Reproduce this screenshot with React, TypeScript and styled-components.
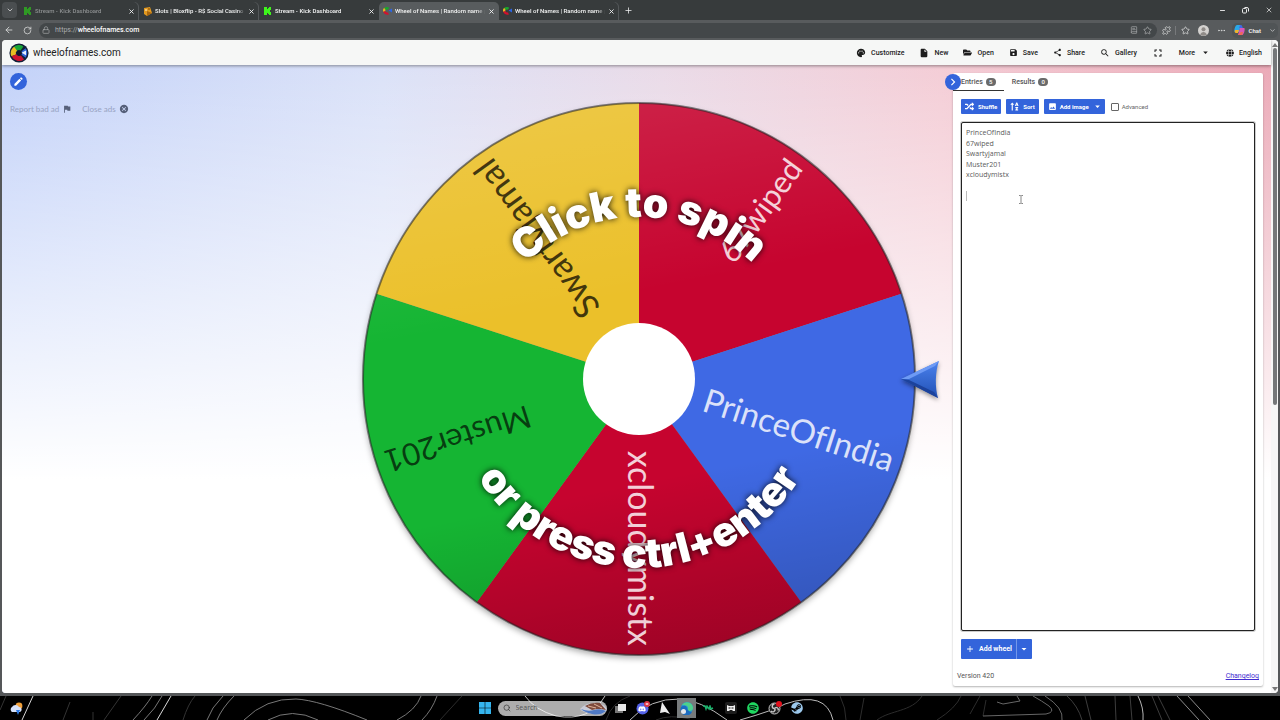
import React from "react";
import styled, { createGlobalStyle, css } from "styled-components";
import {
  MdPalette, MdInsertDriveFile, MdSave, MdShare, MdSearch, MdFullscreen,
  MdArrowDropDown, MdImage, MdFlag, MdCancel, MdEdit, MdAdd, MdChevronRight,
} from "react-icons/md";
import { FaFolderOpen, FaGlobe, FaRandom, FaSortAlphaUp, FaSpotify, FaSteam, FaDiscord } from "react-icons/fa";
import {
  ArrowLeft, RotateCw, Lock, X, Plus, Minus, ChevronDown, Star,
  BookText, Puzzle, Ellipsis, Search,
} from "lucide-react";

const GlobalStyle = createGlobalStyle`
  *, *::before, *::after { box-sizing: border-box; }
  html, body, #root { height: 100%; }
  body { margin: 0; background: #000; font-family: Roboto, "Liberation Sans", sans-serif; }
  button { font: inherit; border: 0; padding: 0; background: none; color: inherit; cursor: pointer; }
  svg { display: block; flex: none; }
`;

const BLUE = "#3364db";
const uiFont = css`font-family: "Open Sans", "Noto Sans", sans-serif;`;

const Screen = styled.div`
  display: flex; flex-direction: column; height: 100vh; overflow: hidden;
`;

/* Browser chrome */
const TabStrip = styled.div`
  display: flex; align-items: stretch; height: 20px; background: #373b3c; color: #f4f5f5;
  font-size: 6px; font-weight: 500;
`;
const TabMenu = styled.button`
  width: 15px; height: 16px; margin: 2px; border-radius: 4px; background: #4a4e50;
  display: grid; place-items: center;
`;
const Tab = styled.div<{ $active?: boolean; $divided?: boolean }>`
  display: flex; align-items: center; gap: 3px; flex: 0 1 120px; min-width: 0;
  margin-top: 2px; padding: 0 4px; border-radius: 5px 5px 0 0;
  background: ${(p) => (p.$active ? "#585c5e" : "transparent")};
  box-shadow: ${(p) => (p.$divided ? "inset -1px 0 #54585a" : "none")};
`;
const TabTitle = styled.span<{ $muted?: boolean }>`
  flex: 1; min-width: 0; overflow: hidden; white-space: nowrap; line-height: 10px;
  color: ${(p) => (p.$muted ? "#8d9091" : "inherit")};
  mask-image: linear-gradient(to right, #000 calc(100% - 8px), transparent);
`;
const NewTab = styled.button`width: 18px; display: grid; place-items: center;`;
const WindowControls = styled.div`display: flex; margin-left: auto;`;
const WindowButton = styled.button`width: 23px; display: grid; place-items: center;`;

const AddressBar = styled.div`
  display: flex; align-items: center; height: 20px; padding: 0 2px 0 0; background: #585b5d; color: #dcdddd;
  font-size: 7px;
`;
const NavButton = styled.button`width: 18px; display: grid; place-items: center;`;
const UrlField = styled.div`
  flex: 1; display: flex; align-items: center; gap: 5px; height: 15px; margin-left: 3px; padding: 0 5px 0 3px;
  border-radius: 8px; background: #434749; color: #a9abac;
`;
const UrlText = styled.span`flex: 1; line-height: 10px; b { color: #fff; font-weight: 500; }`;
const BarButton = styled.button`width: 18px; display: grid; place-items: center;`;
const BarDivider = styled.span`width: 1px; height: 9px; background: #77797b;`;
const ChatButton = styled.button`
  display: flex; align-items: center; gap: 3px; height: 15px; margin-left: 2px; padding: 0 2px; border-radius: 5px;
  background: #505456; font-size: 6px; font-weight: 600; color: #f2f2f2;
  svg:last-child { margin-left: 5px; }
`;

/* Page */
const Frame = styled.div`
  flex: 1; min-height: 0; display: flex; padding: 0 2px 3px; background: #555759;
`;
const Viewport = styled.div`
  flex: 1; min-width: 0; display: flex; border-radius: 4px; overflow: hidden; background: #fff;
`;
const Page = styled.div`flex: 1; min-width: 0; display: flex; flex-direction: column;`;
const Header = styled.header`
  display: flex; align-items: center; justify-content: space-between; height: 25px; padding: 0 9px 0 7px;
  background: #f6f7f6; box-shadow: 0 1px 3px rgba(0, 0, 0, 0.4); z-index: 1; color: #1d1d1d;
`;
const Brand = styled.a`
  display: flex; align-items: center; gap: 4px; font-size: 10px; line-height: 14px; color: #222; text-decoration: none;
`;
const Nav = styled.nav`display: flex; align-items: center; gap: 15px;`;
const NavItem = styled.button`
  display: flex; align-items: center; gap: 5px; font-size: 7px; font-weight: 500; line-height: 10px;
`;
const Stage = styled.main`
  flex: 1; min-height: 0; display: grid; grid-template-columns: minmax(0, 1fr) minmax(0, 600px) 310px;
  column-gap: 8px; padding: 8px 8px 7px;
  background:
    linear-gradient(to bottom, rgba(255, 255, 255, 0) 0%, rgba(255, 255, 255, 0.55) 36%, #fff 66%),
    linear-gradient(to right, #c3d2f9 0%, #dbe2f8 30%, #eadbe8 52%, #f4cdd6 74%, #eba9b7 100%);
`;
const Side = styled.aside`display: flex; flex-direction: column; align-items: flex-start; gap: 14px;`;
const EditButton = styled.button`
  width: 17px; height: 17px; border-radius: 50%; background: ${BLUE}; color: #fff; display: grid; place-items: center;
`;
const AdLinks = styled.div`
  display: flex; gap: 10px; font-family: Lato, sans-serif; font-size: 8px; line-height: 10px; color: #98a3c2;
`;
const AdLink = styled.button`display: flex; align-items: center; gap: 3px; svg { color: #56607a; }`;
const WheelArea = styled.div`display: flex; align-items: center; padding-bottom: 2px;`;
const WheelSvg = styled.svg`width: 100%; height: auto; overflow: visible;`;
const SliceLabel = styled.text`
  font-family: Lato, "Open Sans", sans-serif; font-weight: 400; text-anchor: end; dominant-baseline: central;
`;
const Hint = styled.text`
  font-family: Inter, Roboto, sans-serif; font-size: 41px; font-weight: 900; text-anchor: middle; fill: #fff;
  filter: drop-shadow(0 0 3px rgba(0, 0, 0, 0.9));
`;
const WheelArrow = styled.g`filter: drop-shadow(0 2px 2px rgba(0, 0, 0, 0.4));`;

/* Entries panel */
const Panel = styled.section`
  position: relative; display: flex; flex-direction: column; min-height: 0; background: #fff;
  border-radius: 2px; box-shadow: 0 1px 2px rgba(0, 0, 0, 0.3);
`;
const CollapseButton = styled.button`
  position: absolute; left: -8px; top: 1px; width: 16px; height: 16px; border-radius: 50%;
  background: ${BLUE}; color: #fff; display: grid; place-items: center;
`;
const PanelTabs = styled.div`display: flex; height: 18px;`;
const PanelTab = styled.button<{ $active?: boolean }>`
  display: flex; align-items: center; gap: 3px; padding: 0 8px; font-size: 7px; font-weight: 500; line-height: 10px;
  color: #555; border-bottom: 1px solid ${(p) => (p.$active ? "#333" : "transparent")};
`;
const Badge = styled.span`
  min-width: 10px; height: 8px; padding: 0 3px; border-radius: 4px; background: #6a6a6a; color: #fff;
  font-size: 6px; line-height: 8px; text-align: center;
`;
const PanelBody = styled.div`
  flex: 1; min-height: 0; display: flex; flex-direction: column; padding: 8px 8px 0; gap: 8px;
`;
const Tools = styled.div`display: flex; align-items: center; gap: 5px;`;
const ToolButton = styled.button`
  display: flex; align-items: center; gap: 4px; height: 15px; padding: 0 4px; border-radius: 1px;
  background: ${BLUE}; color: #fff; font-size: 6px; font-weight: 700; line-height: 8px; white-space: nowrap;
`;
const MenuToolButton = styled(ToolButton)`gap: 3px; padding-right: 2px;`;
const CheckLabel = styled.label`
  display: flex; align-items: center; gap: 3px; margin-left: 1px; font-size: 6px; line-height: 8px; color: #666;
`;
const CheckBox = styled.input`
  appearance: none; width: 8px; height: 8px; margin: 0; border: 1px solid #666; border-radius: 1px; background: #fff;
`;
const EntryBox = styled.div`position: relative; flex: 1; min-height: 0; display: flex;`;
const Entries = styled.textarea`
  ${uiFont}
  flex: 1; min-width: 0; resize: none; outline: none; padding: 5px 4px; border: 1px solid #222; border-radius: 2px;
  font-size: 7px; line-height: 1.5; color: #5a5a5a; background: #fff;
  box-shadow: 0 0 0 1px rgba(0, 0, 0, 0.2);
`;
const Caret = styled.span`position: absolute; left: 5px; top: 69px; width: 1px; height: 10px; background: #bbb;`;
const Pointer = styled.svg`position: absolute; left: 57px; top: 73px;`;
const SplitButton = styled.div`
  display: flex; align-self: flex-start; border-radius: 1px; background: ${BLUE}; color: #fff;
`;
const AddWheel = styled.button`
  display: flex; align-items: center; gap: 4px; height: 20px; padding: 0 4px; font-size: 7px; font-weight: 700;
  border-right: 1px solid #7397ea;
`;
const AddMore = styled.button`width: 15px; height: 20px; display: grid; place-items: center;`;
const PanelFooter = styled.footer`
  display: flex; justify-content: space-between; padding: 12px 4px 5px; font-size: 7px; line-height: 10px; color: #555;
  a { color: #3f2bd0; }
`;

/* Scrollbar */
const ScrollRail = styled.div`
  width: 7px; display: flex; flex-direction: column; align-items: center; gap: 1px; padding: 3px 0 2px; background: #f6f6f6;
`;
const ScrollArrow = styled.span<{ $down?: boolean }>`
  width: 0; height: 0; border: 3px solid transparent; border-width: ${(p) => (p.$down ? "4px 3px 0" : "0 3px 4px")};
  border-top-color: ${(p) => (p.$down ? "#777" : "transparent")};
  border-bottom-color: ${(p) => (p.$down ? "transparent" : "#777")};
`;
const ScrollTrack = styled.div`flex: 1;`;
const ScrollThumb = styled.div`width: 4px; height: 56%; border-radius: 2px; background: #757779;`;

/* Taskbar */
const Taskbar = styled.footer`
  position: relative; display: grid; grid-template-columns: minmax(0, 1fr) auto minmax(0, 1fr); align-items: center;
  height: 24px; background: #000; overflow: hidden;
`;
const Wallpaper = styled.svg`position: absolute; left: 0; top: 0; width: 100%; height: 100%;`;
const Weather = styled.button`position: relative; justify-self: start; margin-left: 9px;`;
const TaskGroup = styled.div`position: relative; display: flex; align-items: center; padding-left: 5px;`;
const StartButton = styled.button`width: 14px; margin-right: 6px; display: grid; place-items: center;`;
const TaskSearch = styled.label`
  ${uiFont}
  display: flex; align-items: center; gap: 5px; width: 109px; height: 15px; margin-right: 3px; padding-left: 5px;
  border-radius: 8px; overflow: hidden; background: rgba(255, 255, 255, 0.68); color: #333;
`;
const TaskSearchInput = styled.input`
  flex: 1; min-width: 0; border: 0; padding: 0; background: none; outline: none; font: inherit; font-size: 7px; line-height: 12px;
  &::placeholder { color: #555; opacity: 1; }
`;
const TaskIcon = styled.button<{ $active?: boolean }>`
  width: 22px; height: 20px; display: grid; place-items: center;
  background: ${(p) => (p.$active ? "linear-gradient(to right, transparent 1px, #777b7c 1px, #777b7c 20px, transparent 20px)" : "none")};
`;

const KickIcon = ({ dim }: { dim?: boolean }) => (
  <svg width="9" height="8" viewBox="0 0 9 8" fill={dim ? "#2f9a24" : "#3ef51c"}>
    <path d="M1 0h3v2h1V1h1V0h2v3H7v1H6v0h1v1h1v3H6V7H5V6H4v2H1z" />
  </svg>
);
const DiceIcon = () => (
  <svg width="9" height="9" viewBox="0 0 9 9">
    <path d="M1 1l6-1 2 6-5 3-3-2z" fill="#e49a1f" />
    <path d="M4 4l5 2-5 3z" fill="#a9660f" />
    <circle cx="3" cy="3" r=".8" fill="#fff" /><circle cx="6" cy="2" r=".8" fill="#6b3d06" />
  </svg>
);
const MiniWheel = () => (
  <svg width="9" height="8" viewBox="0 0 9 8" fill="none" strokeWidth="2.4">
    <path d="M1 4.6A3 3 0 0 1 2.2 1.8" stroke="#e9b820" />
    <path d="M2 2A3 3 0 0 1 5.6 1.8" stroke="#19a62e" />
    <path d="M1.4 4.4A3 3 0 0 0 5.4 6.4" stroke="#d3112d" />
    <path d="M9 1.5L5.6 3.6 9 5.5z" fill="#2d66e0" />
  </svg>
);
const RestoreIcon = () => (
  <svg width="7" height="7" viewBox="0 0 7 7" fill="none" stroke="#e9eaea">
    <rect x=".5" y="1.5" width="4" height="4.500" rx="1" />
    <path d="M2.500 .5H5Q6.500 .5 6.500 2V4.500" />
  </svg>
);
const Logo = () => (
  <svg width="20" height="20" viewBox="0 0 20 20">
    <circle cx="10" cy="10" r="9.6" fill="#13203a" />
    <g fill="none" strokeWidth="5">
      <path d="M6 6.300A5.400 5.400 0 0 1 13 5.500" stroke="#18a537" />
      <path d="M4.700 12.400A5.600 5.600 0 0 1 6.600 5.800" stroke="#e8bd23" />
      <path d="M13.500 14.400A5.600 5.600 0 0 1 5 12.200" stroke="#ce1430" />
      <path d="M14.600 13.200A5.600 5.600 0 0 0 14.600 6.800" stroke="#2f63d6" />
    </g>
    <circle cx="10" cy="10" r="2.4" fill="#0e1830" />
    <path d="M12.6 9.8L17 7.6v4.6z" fill="#e8f0ff" />
  </svg>
);
const CopilotIcon = () => (
  <svg width="11" height="10" viewBox="0 0 11 10">
    <path d="M3 0h4l-2 7H1C-.6 7 1 0 3 0z" fill="#2aa8e8" />
    <path d="M1 5h4l-1 3H2C.6 8 .4 6 1 5z" fill="#f0b12e" />
    <path d="M6 3h4c1.6 0 0 7-2 7H4z" fill="#d757b6" />
    <path d="M6 0h1c1.4 0 1.4 3 2 3H5z" fill="#3d6be8" />
    <path d="M7 7h2l-1 3H4z" fill="#ef6a54" />
  </svg>
);

type Slice = { name: string; angle: number; fill: string; ink: string; size: number };
const slices: Slice[] = [
  { name: "67wiped", angle: -54, fill: "#c6042f", ink: "rgba(255,255,255,.82)", size: 31 },
  { name: "PrinceOfIndia", angle: 18, fill: "#3f69e4", ink: "rgba(255,255,255,.82)", size: 33 },
  { name: "xcloudymistx", angle: 90, fill: "#c6042f", ink: "rgba(255,255,255,.82)", size: 34 },
  { name: "Muster201", angle: 162, fill: "#15b533", ink: "rgba(0,0,0,.68)", size: 31 },
  { name: "Swartyjamal", angle: 234, fill: "#ebc02a", ink: "rgba(0,0,0,.72)", size: 35 },
];
const RADIUS = 276;
const polar = (deg: number, r: number) => {
  const a = (deg * Math.PI) / 180;
  return `${(Math.cos(a) * r).toFixed(2)} ${(Math.sin(a) * r).toFixed(2)}`;
};

const Wheel = () => (
  <WheelSvg viewBox="-294 -294 600 588" role="img" aria-label="Wheel of names">
    <defs>
      <linearGradient id="shade" x1="0.4" y1="0" x2="0.6" y2="1">
        <stop offset="0" stopColor="#fff" stopOpacity="0.12" />
        <stop offset="0.35" stopColor="#fff" stopOpacity="0" />
        <stop offset="0.68" stopColor="#000" stopOpacity="0" />
        <stop offset="1" stopColor="#000" stopOpacity="0.2" />
      </linearGradient>
      <linearGradient id="arrow" x1="0" y1="0" x2="0" y2="1">
        <stop offset="0" stopColor="#4b82ee" />
        <stop offset="1" stopColor="#2150b4" />
      </linearGradient>
      <filter id="wheelShadow" x="-10%" y="-10%" width="120%" height="120%">
        <feDropShadow dx="0" dy="3" stdDeviation="3" floodColor="#000" floodOpacity="0.35" />
      </filter>
      <path id="topArc" d="M-162 0A162 162 0 0 1 162 0" />
      <path id="bottomArc" d="M-189 0A189 189 0 0 0 189 0" />
    </defs>
    <circle r={RADIUS} fill="#888" filter="url(#wheelShadow)" />
    {slices.map((s) => (
      <path key={s.name} fill={s.fill}
        d={`M0 0L${polar(s.angle - 36, RADIUS)}A${RADIUS} ${RADIUS} 0 0 1 ${polar(s.angle + 36, RADIUS)}Z`} />
    ))}
    <circle r={RADIUS} fill="url(#shade)" />
    <circle r={RADIUS} fill="none" stroke="#222" strokeOpacity="0.55" strokeWidth="2" />
    {slices.map((s) => (
      <g key={s.name} transform={`rotate(${s.angle})`}>
        <SliceLabel x="267" y="-2" fill={s.ink} fontSize={s.size}>{s.name}</SliceLabel>
      </g>
    ))}
    <circle r="56" fill="#fff" />
    <Hint><textPath href="#topArc" startOffset="50%">Click to spin</textPath></Hint>
    <Hint><textPath href="#bottomArc" startOffset="50%">or press ctrl+enter</textPath></Hint>
    <WheelArrow>
      <path d="M262 0L300 -18C296 -7 296 9 299 19Z" fill="url(#arrow)" />
      <path d="M262 0L299 19L295 13L270 1Z" fill="#1c429c" />
      <path d="M262 0L300 -18L296 -13L270 0Z" fill="#6d9af5" />
    </WheelArrow>
  </WheelSvg>
);

const lines: [string, string, number][] = [
  ["M33 0L22 24M171 0L157 24", "#d8d8d8", 1],
  ["M152 0Q146 10 133 24M162 0Q156 12 144 24M223 0L213 12L207 24M234 0Q222 12 217 24", "#777", 1],
  ["M6 0L0 14M121 0L104 24M195 0Q188 8 183 24M70 6L63 24M93 16V24", "#333", 1],
  ["M244 24Q266 2 296 3Q318 4 367 24M268 24Q292 11 318 24M421 0Q416 14 397 24M437 0Q432 14 422 24", "#777", 1],
  ["M525 0Q535 14 556 20Q590 26 605 0M630 24Q650 2 680 3Q700 4 727 24M740 24Q775 14 785 8Q826 -6 833 24", "#bbb", 1],
  ["M656 24Q670 18 690 23M606 24Q612 6 630 0M440 24L462 0M840 0Q846 12 846 24M922 0C912 16 890 14 877 24M961 0Q956 12 937 24M864 2L860 24M980 0L970 18M986 4L983 20", "#2c2c2c", 1],
  ["M997 6L1003 8L1020 5L1017 0M983 20L1046 18Q1056 16 1049 10Q1042 5 1033 0M1045 0Q1064 12 1062 24", "#666", 1],
  ["M1067 0Q1078 10 1082 24M1085 0L1091 24M1115 0L1116 24M1130 0L1132 24M1152 0L1162 24M1158 0L1170 24", "#3d3d3d", 1],
  ["M1138 0Q1144 12 1143 24", "#b4b4b4", 1],
  ["M1177 0L1199 24M1188 0L1210 24", "#8b8b8b", 1],
];

const tabs = [
  { title: "Stream - Kick Dashboard", icon: <KickIcon dim />, muted: true, divided: true },
  { title: "Slots | Bloxflip - R$ Social Casino &", icon: <DiceIcon />, divided: true },
  { title: "Stream - Kick Dashboard", icon: <KickIcon /> },
  { title: "Wheel of Names | Random name p", icon: <MiniWheel />, active: true },
  { title: "Wheel of Names | Random name p", icon: <MiniWheel />, divided: true },
];

export default function App() {
  return (
    <Screen>
      <GlobalStyle />
      <TabStrip>
        <TabMenu aria-label="Tab menu"><ChevronDown size={8} /></TabMenu>
        {tabs.map((t, i) => (
          <Tab key={i} $active={t.active} $divided={t.divided}>
            {t.icon}
            <TabTitle $muted={t.muted}>{t.title}</TabTitle>
            <button aria-label="Close tab"><X size={7} strokeWidth={3} /></button>
          </Tab>
        ))}
        <NewTab aria-label="New tab"><Plus size={9} /></NewTab>
        <WindowControls>
          <WindowButton aria-label="Minimize"><Minus size={7} strokeWidth={3} /></WindowButton>
          <WindowButton aria-label="Restore"><RestoreIcon /></WindowButton>
          <WindowButton aria-label="Close"><X size={8} strokeWidth={2} /></WindowButton>
        </WindowControls>
      </TabStrip>
      <AddressBar>
        <NavButton aria-label="Back"><ArrowLeft size={10} /></NavButton>
        <NavButton aria-label="Reload"><RotateCw size={9} /></NavButton>
        <UrlField>
          <Lock size={8} />
          <UrlText>https://<b>wheelofnames.com</b></UrlText>
          <BookText size={8} />
          <Star size={9} />
        </UrlField>
        <BarButton aria-label="Extensions"><Puzzle size={9} /></BarButton>
        <BarDivider />
        <BarButton aria-label="Favorites"><Star size={9} /></BarButton>
        <BarButton aria-label="Profile">
          <svg width="11" height="11" viewBox="0 0 11 11">
            <circle cx="5.5" cy="5.5" r="5.5" fill="#d4d2d0" />
            <circle cx="5.5" cy="4.2" r="2" fill="#8f8b88" />
            <path d="M2 9.4Q5.5 4.600 9 9.400Q5.500 12 2 9.400z" fill="#8f8b88" />
          </svg>
        </BarButton>
        <BarButton aria-label="More"><Ellipsis size={9} /></BarButton>
        <ChatButton><CopilotIcon />Chat<ChevronDown size={7} /></ChatButton>
      </AddressBar>

      <Frame>
        <Viewport>
          <Page>
            <Header>
              <Brand href="#"><Logo />wheelofnames.com</Brand>
              <Nav>
                <NavItem><MdPalette size={10} />Customize</NavItem>
                <NavItem><MdInsertDriveFile size={10} />New</NavItem>
                <NavItem><FaFolderOpen size={9} />Open</NavItem>
                <NavItem><MdSave size={9} />Save</NavItem>
                <NavItem><MdShare size={9} />Share</NavItem>
                <NavItem><MdSearch size={10} />Gallery</NavItem>
                <NavItem aria-label="Fullscreen"><MdFullscreen size={12} /></NavItem>
                <NavItem>More<MdArrowDropDown size={11} /></NavItem>
                <NavItem><FaGlobe size={8} />English</NavItem>
              </Nav>
            </Header>
            <Stage>
              <Side>
                <EditButton aria-label="Edit title"><MdEdit size={11} /></EditButton>
                <AdLinks>
                  <AdLink>Report bad ad<MdFlag size={10} /></AdLink>
                  <AdLink>Close ads<MdCancel size={10} /></AdLink>
                </AdLinks>
              </Side>
              <WheelArea><Wheel /></WheelArea>
              <Panel>
                <PanelTabs>
                  <PanelTab $active>Entries<Badge>5</Badge></PanelTab>
                  <PanelTab>Results<Badge>0</Badge></PanelTab>
                </PanelTabs>
                <CollapseButton aria-label="Hide panel"><MdChevronRight size={14} /></CollapseButton>
                <PanelBody>
                  <Tools>
                    <ToolButton><FaRandom size={9} />Shuffle</ToolButton>
                    <ToolButton><FaSortAlphaUp size={9} />Sort</ToolButton>
                    <MenuToolButton><MdImage size={9} />Add image<MdArrowDropDown size={11} /></MenuToolButton>
                    <CheckLabel><CheckBox type="checkbox" />Advanced</CheckLabel>
                  </Tools>
                  <EntryBox>
                    <Entries aria-label="Entries" spellCheck={false}
                      defaultValue={"PrinceOfIndia\n67wiped\nSwartyjamal\nMuster201\nxcloudymistx\n\n"} />
                    <Caret />
                    <Pointer width="6" height="9" viewBox="0 0 6 9" fill="none" stroke="#888" strokeWidth="1">
                      <path d="M1 .5h1.500L3 1l.5-.5H5M3 1v7M1 8.500h1.500L3 8l.5.5H5" />
                    </Pointer>
                  </EntryBox>
                  <SplitButton>
                    <AddWheel><MdAdd size={10} />Add wheel</AddWheel>
                    <AddMore aria-label="More wheel options"><MdArrowDropDown size={12} /></AddMore>
                  </SplitButton>
                </PanelBody>
                <PanelFooter><span>Version 420</span><a href="#">Changelog</a></PanelFooter>
              </Panel>
            </Stage>
          </Page>
          <ScrollRail>
            <ScrollArrow />
            <ScrollTrack><ScrollThumb /></ScrollTrack>
            <ScrollArrow $down />
          </ScrollRail>
        </Viewport>
      </Frame>

      <Taskbar>
        <Wallpaper viewBox="0 0 1280 24" preserveAspectRatio="xMidYMid slice" fill="none">
          {lines.map(([d, c, w], i) => <path key={i} d={d} stroke={c} strokeWidth={w} />)}
        </Wallpaper>
        <Weather aria-label="Weather">
          <svg width="14" height="13" viewBox="0 0 14 13">
            <circle cx="10" cy="4" r="3.400" fill="#f0a03a" />
            <path d="M3 10a3 3 0 0 1 0-5 4 4 0 0 1 7 0 2.600 2.600 0 0 1 1 5z" fill="#d6e2fb" />
            <path d="M7 8l4 0-2 5z" fill="#2d7be6" />
          </svg>
        </Weather>
        <TaskGroup>
          <StartButton aria-label="Start">
            <svg width="12" height="12" viewBox="0 0 12 12" fill="#35b5ee"><path d="M0 0h5.700v5.700H0zM6.300 0H12v5.700H6.300zM0 6.300h5.700V12H0zM6.300 6.300H12V12H6.300z" /></svg>
          </StartButton>
          <TaskSearch>
            <Search size={8} />
            <TaskSearchInput placeholder="Search" aria-label="Search" />
            <svg width="27" height="13" viewBox="0 0 27 13">
              <path d="M0 7Q6 0 16 1T27 8Q22 14 12 12T0 7z" fill="#c9ccd8" />
              <path d="M5 4Q12 0 20 1L26 8Q18 6 12 8z" fill="#7d4a3c" />
              <path d="M1 7Q8 10 14 8T26 9Q20 14 12 12T1 7z" fill="#4f79c4" />
              <path d="M8 4l8 2M14 2l8 4" stroke="#e0b49a" />
            </svg>
          </TaskSearch>
          <TaskIcon aria-label="Task view">
            <svg width="12" height="11" viewBox="0 0 12 11"><path d="M0 3h8v7H0z" fill="#777" /><path d="M3 1h8v7H3z" fill="#e8e8e8" /></svg>
          </TaskIcon>
          <TaskIcon aria-label="Discord">
            <svg width="14" height="14" viewBox="0 0 14 14">
              <circle cx="6.500" cy="7.500" r="6" fill="#5563e8" />
              <g transform="translate(2 4)"><FaDiscord size={8} color="#fff" /></g>
              <circle cx="11" cy="3" r="3" fill="#dc3545" />
              <path d="M9.500 3h3M11 2v2" stroke="#fff" strokeWidth=".8" />
            </svg>
          </TaskIcon>
          <TaskIcon aria-label="Launcher">
            <svg width="10" height="12" viewBox="0 0 10 12"><path d="M2 0l8 12L5 10 0 11z" fill="#ededed" /></svg>
          </TaskIcon>
          <TaskIcon $active aria-label="Edge">
            <svg width="14" height="14" viewBox="0 0 14 14">
              <circle cx="7" cy="7" r="6" fill="#2497d8" />
              <path d="M2 4A6 6 0 0 1 13 7Q13 10 9 10 7 9 8 7 8 4 2 4z" fill="#4fd18b" />
              <path d="M1 6Q6 3 7 7T12 11A6 6 0 0 1 1 6z" fill="#1b6cc0" />
              <circle cx="3.500" cy="10.500" r="2.500" fill="#e3e6ea" />
            </svg>
          </TaskIcon>
          <TaskIcon aria-label="Terminal">
            <svg width="11" height="6" viewBox="0 0 11 6" fill="none" stroke="#19b36b" strokeWidth="1.400"><path d="M0 1h2l1 3 1-3 2 3 1-3 1 3 2-1" /></svg>
          </TaskIcon>
          <TaskIcon aria-label="Mask app">
            <svg width="12" height="12" viewBox="0 0 12 12"><rect width="12" height="12" rx="2" fill="#1d1d1d" /><path d="M2 3l2 1h4l2-1v6H8L7 8H5L4 9H2z" fill="#f0f0f0" /><path d="M3.500 6h2M6.500 6h2" stroke="#111" /></svg>
          </TaskIcon>
          <TaskIcon aria-label="Spotify"><FaSpotify size={12} color="#1fd760" /></TaskIcon>
          <TaskIcon aria-label="OBS">
            <svg width="14" height="14" viewBox="0 0 14 14" fill="none">
              <circle cx="6.500" cy="7.500" r="5.500" fill="#222" stroke="#c8c8c8" />
              <path d="M6.500 3a2 2 0 0 0 0 4.500M10 9.500a2 2 0 0 0-3.500-2M3 10a2 2 0 0 0 3.500-2.500" stroke="#c8c8c8" strokeWidth="1.400" />
              <circle cx="11" cy="3" r="3" fill="#e0101c" />
            </svg>
          </TaskIcon>
          <TaskIcon aria-label="Steam"><FaSteam size={12} color="#9cc8ec" /></TaskIcon>
        </TaskGroup>
      </Taskbar>
    </Screen>
  );
}
